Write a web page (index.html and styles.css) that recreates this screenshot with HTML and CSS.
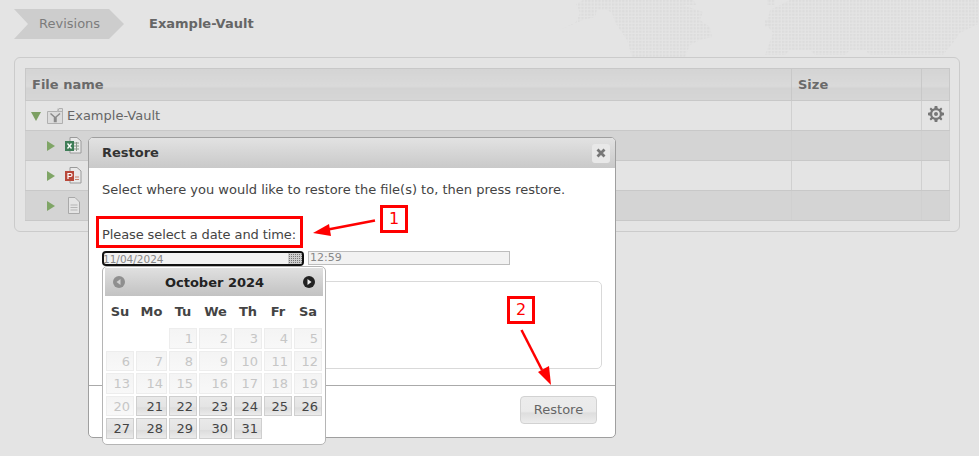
FILE: index.html
```html
<!DOCTYPE html>
<html lang="en">
<head>
<meta charset="utf-8">
<title>Revisions</title>
<link rel="stylesheet" href="styles.css">
</head>
<body>
<svg class="map" width="419" height="57" viewBox="560 0 419 57" aria-hidden="true">
  <defs>
    <pattern id="dots" width="3.4" height="3.4" patternUnits="userSpaceOnUse"><rect width="2.2" height="2.2" fill="#dcdcdc"/></pattern>
  </defs>
  <path fill="url(#dots)" d="M583 0H693L697 5H683L703 12L700 20L710 27L712 37L700 40L690 45L685 57H632L627 40L620 30L615 22L612 13L607 10H597L595 17L583 20L560 30L576 22L580 13L576 4Z"/>
  <path fill="url(#dots)" d="M765 55L773 33L766 24L770 10L790 0H978V24L960 33L953 43L943 55H870L865 50H850L845 55H815L810 50H790L785 55Z"/>
  <path fill="url(#dots)" d="M767 0H775V5H767ZM765 20H772V27H765Z"/>
</svg>
<nav class="crumbs">
  <span class="crumb-link">Revisions</span>
  <span class="crumb-current">Example-Vault</span>
</nav>
<section class="panel">
  <table class="files">
    <thead>
      <tr><th class="c-name">File name</th><th class="c-size">Size</th><th class="c-act"></th></tr>
    </thead>
    <tbody>
      <tr class="r1">
        <td><div class="node"><span class="tri-down"></span>
          <svg class="ic" width="16" height="16" viewBox="0 0 16 16"><path d="M.5 3.500H10.500L12 .5H15.500V15.500H.5Z" fill="#dcdcdc" stroke="#b0b0b0"/><path d="M11 .5V3.500H15.500" fill="none" stroke="#b0b0b0"/><path d="M3.500 5.500L7.500 9V13.500H9V9L13 5.500" fill="none" stroke="#8a8a8a" stroke-width="1.500"/></svg>
          <span>Example-Vault</span></div></td>
        <td></td>
        <td class="act"><svg width="16" height="16" viewBox="0 0 16 16"><path fill="#777" fill-rule="evenodd" d="M6.7 0H9.300L9.700 2.200L11.300 2.900L13.100 1.600L14.400 2.900L13.100 4.700L13.800 6.300L16 6.700V9.300L13.800 9.700L13.100 11.300L14.400 13.100L13.100 14.400L11.300 13.100L9.700 13.800L9.300 16H6.700L6.300 13.800L4.700 13.100L2.900 14.400L1.600 13.100L2.900 11.300L2.200 9.700L0 9.300V6.700L2.200 6.300L2.900 4.700L1.600 2.900L2.900 1.600L4.700 2.900L6.300 2.200ZM8 4.200A3.800 3.800 0 1 0 8 11.800A3.800 3.800 0 1 0 8 4.200ZM8 6A2 2 0 1 1 8 10A2 2 0 1 1 8 6Z"/></svg></td>
      </tr>
      <tr class="r2">
        <td><div class="node sub"><span class="tri-right"></span>
          <svg class="ic" width="17" height="17" viewBox="0 0 17 17"><path d="M5 .5H12L16 4V16H5Z" fill="#e9e9e9" stroke="#9a9a9a"/><path d="M9 6H14M9 9H14M9 12H14M11.500 5V14" stroke="#8a9a8a"/><rect x="0" y="4" width="9" height="10" fill="#3f7d57"/><path d="M2.500 6.500L6.500 11.500M6.500 6.500L2.500 11.500" stroke="#fff" stroke-width="1.300"/></svg></div></td>
        <td></td><td></td>
      </tr>
      <tr class="r3">
        <td><div class="node sub"><span class="tri-right"></span>
          <svg class="ic" width="17" height="17" viewBox="0 0 17 17"><path d="M5 .5H12L16 4V16H5Z" fill="#e9e9e9" stroke="#9a9a9a"/><path d="M10 10H14M10 12.500H14" stroke="#c9806a"/><rect x="0" y="4" width="9" height="10" fill="#b8483a"/><path d="M3 12V6.500H5.500A1.500 1.500 0 0 1 5.500 9.500H3" fill="none" stroke="#fff" stroke-width="1.200"/></svg></div></td>
        <td></td><td></td>
      </tr>
      <tr class="r4">
        <td><div class="node sub"><span class="tri-right"></span>
          <svg class="ic" width="17" height="17" viewBox="0 0 17 17"><path d="M3.500 .5H10L14.500 5V16.500H3.500Z" fill="#e4e4e4" stroke="#a9a9a9"/><path d="M5.500 8H12.500M5.500 10.500H12.500M5.500 13H12.500" stroke="#b5b5b5"/></svg></div></td>
        <td></td><td></td>
      </tr>
    </tbody>
  </table>
</section>

<div class="dialog">
  <header class="dlg-head">
    <h2>Restore</h2>
    <span class="close"><svg width="10" height="10" viewBox="0 0 10 10"><path d="M1.500 1.500L8.500 8.500M8.500 1.500L1.500 8.500" stroke="#777" stroke-width="2.800"/></svg></span>
  </header>
  <div class="dlg-body">
    <p class="intro">Select where you would like to restore the file(s) to, then press restore.</p>
    <p class="pick">Please select a date and time:</p>
    <div class="inputs">
      <div class="date-field"><span class="val">11/04/2024</span><span class="cal-ic"></span></div>
      <div class="time-field">12:59</div>
    </div>
    <div class="fieldbox"></div>
  </div>
  <footer class="dlg-foot"><span class="btn">Restore</span></footer>
</div>

<div class="cal">
  <div class="cal-head">
    <span class="nav off"><svg width="12" height="12" viewBox="0 0 12 12"><circle cx="6" cy="6" r="6" fill="#8f8f8f"/><path d="M7.500 3V9L3.500 6Z" fill="#d0d0d0"/></svg></span>
    <span class="month">October 2024</span>
    <span class="nav"><svg width="12" height="12" viewBox="0 0 12 12"><circle cx="6" cy="6" r="6" fill="#222"/><path d="M4.500 3V9L8.500 6Z" fill="#eee"/></svg></span>
  </div>
  <div class="dow"><span>Su</span><span>Mo</span><span>Tu</span><span>We</span><span>Th</span><span>Fr</span><span>Sa</span></div>
  <div class="days">
    <i></i><i></i>
    <b class="d">1</b><b class="d">2</b><b class="d">3</b><b class="d">4</b><b class="d">5</b>
    <b class="d">6</b><b class="d">7</b><b class="d">8</b><b class="d">9</b><b class="d">10</b><b class="d">11</b><b class="d">12</b>
    <b class="d">13</b><b class="d">14</b><b class="d">15</b><b class="d">16</b><b class="d">17</b><b class="d">18</b><b class="d">19</b>
    <b class="d">20</b><b class="a">21</b><b class="a">22</b><b class="a">23</b><b class="a">24</b><b class="a">25</b><b class="a">26</b>
    <b class="a">27</b><b class="a">28</b><b class="a">29</b><b class="a">30</b><b class="a">31</b>
  </div>
</div>

<span class="mark box-label"></span>
<span class="mark num n1">1</span>
<span class="mark num n2">2</span>
<svg class="arrows" width="979" height="456" viewBox="0 0 979 456" aria-hidden="true">
  <path d="M375 220.500L328 229.500" stroke="#f00" stroke-width="2.500" fill="none"/>
  <path d="M313 233L329 224L331 236Z" fill="#f00"/>
  <path d="M521.500 330L542 370" stroke="#f00" stroke-width="2.500" fill="none"/>
  <path d="M551 385L538 372L549 366Z" fill="#f00"/>
</svg>
</body>
</html>
```
FILE: styles.css
```css
* { box-sizing: border-box; }
html, body { margin: 0; height: 100%; }
body {
  position: relative;
  width: 979px;
  height: 456px;
  overflow: hidden;
  background: #e4e4e4;
  font: 13px/16px "DejaVu Sans", Verdana, sans-serif;
  color: #666;
}
.map { position: absolute; left: 560px; top: 0; }
.crumbs {
  position: relative;
  display: flex;
  align-items: center;
  height: 30px;
  margin: 9px 0 0 14px;
}
.crumb-link {
  display: flex;
  align-items: center;
  width: 110px;
  height: 30px;
  padding-left: 25px;
  background: #cdcdcd;
  color: #7c7c7c;
  clip-path: polygon(0 0, 95px 0, 110px 15px, 95px 30px, 0 30px, 14px 15px);
}
.crumb-current { margin-left: 25px; font-weight: 700; color: #666; }
.panel {
  position: relative;
  width: 946px;
  height: 175px;
  margin: 18px 0 0 14px;
  padding: 10px;
  background: #e4e4e4;
  border: 1px solid #cbcbcb;
  border-radius: 6px;
}
.files {
  width: 924px;
  border-collapse: collapse;
  table-layout: fixed;
  border: 1px solid #c8c8c8;
}
.files th {
  height: 32px;
  padding: 0 6px;
  text-align: left;
  font-weight: 700;
  color: #6a6a6a;
  background: linear-gradient(#d4d4d4, #dadada 55%, #d3d3d3 60%, #d6d6d6);
  border: 1px solid #c8c8c8;
}
.c-name { width: 766px; }
.c-size { width: 130px; }
.c-act { width: 28px; }
.files td { padding: 0; border: 1px solid #d0d0d0; border-width: 0 1px; }
.r1 td { height: 30px; background: #e4e4e4; border-bottom: 1px solid #c8c8c8; }
.r2 td { height: 30px; background: #d4d4d4; border-bottom: 1px solid #c8c8c8; }
.r3 td { height: 30px; background: #e4e4e4; border-bottom: 1px solid #c8c8c8; }
.r4 td { height: 30px; background: #d4d4d4; border-bottom: 1px solid #c8c8c8; }
.act { text-align: center; }
.act svg { display: block; margin: 0 auto 1px; transform: translateY(-1px); }
.node { display: flex; align-items: center; padding-left: 5px; color: #666; }
.r1 .node { padding-top: 1px; }
.node.sub { padding-left: 21px; }
.ic { flex: none; }
.tri-down {
  width: 0; height: 0;
  margin-right: 6px;
  border-left: 5px solid transparent;
  border-right: 5px solid transparent;
  border-top: 9px solid #7c9f62;
}
.tri-right {
  width: 0; height: 0;
  margin-right: 10px;
  border-top: 5px solid transparent;
  border-bottom: 5px solid transparent;
  border-left: 8px solid #7fa566;
}
.r1 .ic { margin-right: 4px; }

.dialog {
  position: absolute;
  left: 88px;
  top: 137px;
  display: flex;
  flex-direction: column;
  width: 528px;
  height: 301px;
  background: #fff;
  border: 1px solid #9f9f9f;
  border-radius: 5px;
  overflow: hidden;
}
.dlg-head {
  display: flex;
  align-items: center;
  justify-content: space-between;
  flex: none;
  height: 30px;
  padding: 0 5px 0 13px;
  background: linear-gradient(#e2e2e2, #c9c9c9);
}
.dlg-head h2 { margin: 0; font-size: 13px; font-weight: 700; color: #333; }
.close {
  display: flex;
  align-items: center;
  justify-content: center;
  width: 18px;
  height: 19px;
  background: #e8e8e8;
  border-radius: 3px;
}
.dlg-body { flex: none; height: 217px; padding: 14px 13px 0; color: #444; }
.intro { margin: 0; }
.pick { margin: 29px 0 0; letter-spacing: -0.1px; }
.inputs { display: flex; gap: 4px; margin-top: 8px; font-size: 11px; line-height: 12px; color: #888; }
.date-field {
  display: flex;
  justify-content: space-between;
  width: 202px;
  height: 15px;
  font-size: 10.5px;
  background: #f2f2f2;
  border: 2px solid #111;
  border-radius: 4px;
  overflow: hidden;
}
.val { margin-left: -1px; }
.cal-ic {
  width: 14px;
  height: 11px;
  background-color: #777;
  background-image: linear-gradient(#ccc 1px, transparent 1px), linear-gradient(90deg, #ccc 1px, transparent 1px);
  background-size: 2px 2px;
}
.time-field {
  width: 202px;
  height: 14px;
  padding-left: 1px;
  background: #f2f2f2;
  border: 1px solid #bdbdbd;
}
.fieldbox {
  width: 500px;
  height: 88px;
  margin-top: 15px;
  border: 1px solid #d9d9d9;
  border-radius: 5px;
}
.dlg-foot {
  flex: 1;
  display: flex;
  justify-content: flex-end;
  align-items: flex-start;
  padding: 10px 18px 0 0;
  border-top: 1px solid #aaa;
}
.btn {
  display: flex;
  align-items: center;
  justify-content: center;
  width: 77px;
  height: 28px;
  color: #666;
  background: linear-gradient(#ececec, #eaeaea 55%, #dedede 62%, #ececec);
  border: 1px solid #d2d2d2;
  border-radius: 4px;
}

.cal {
  position: absolute;
  left: 102px;
  top: 266px;
  width: 224px;
  height: 179px;
  padding: 1px 2px;
  background: #fff;
  border: 1px solid #b5b5b5;
  border-radius: 5px;
}
.cal-head {
  display: flex;
  align-items: center;
  justify-content: space-between;
  height: 28px;
  padding: 0 8px;
  background: linear-gradient(#e0e0e0, #c2c2c2);
}
.nav { display: flex; }
.month { padding: 1px 0 0 1px; font-weight: 700; color: #222; }
.dow {
  display: grid;
  grid-template-columns: 28px 31px 28px 33px 28px 28px 28px;
  column-gap: 2px;
  margin: 8px 0 0 1px;
  text-align: center;
  font-weight: 700;
  color: #444;
}
.days {
  display: grid;
  grid-template-columns: 28px 31px 28px 33px 28px 28px 28px;
  grid-auto-rows: 20.5px;
  gap: 2px;
  margin: 8px 0 0 1px;
}
.days b {
  padding-right: 3px;
  text-align: right;
  font-weight: 400;
  line-height: 19px;
}
.d { color: #c6c6c6; background: linear-gradient(#f4f4f4, #f8f8f8); border: 1px solid #ededed; }
.a { color: #444; background: linear-gradient(#e9e9e9, #e4e4e4 55%, #dcdcdc 60%, #ebebeb); border: 1px solid #cfcfcf; }

.mark { position: absolute; }
.box-label { left: 96px; top: 216px; width: 207px; height: 32px; border: 3px solid #f00; }
.num {
  display: flex;
  align-items: center;
  justify-content: center;
  width: 28px;
  height: 28px;
  background: #fff;
  border: 3px solid #f00;
  color: #f00;
  font: 16px/1 "DejaVu Sans", sans-serif;
}
.n1 { left: 380px; top: 205px; }
.n2 { left: 507px; top: 296px; }
.arrows { position: absolute; left: 0; top: 0; pointer-events: none; }
```
